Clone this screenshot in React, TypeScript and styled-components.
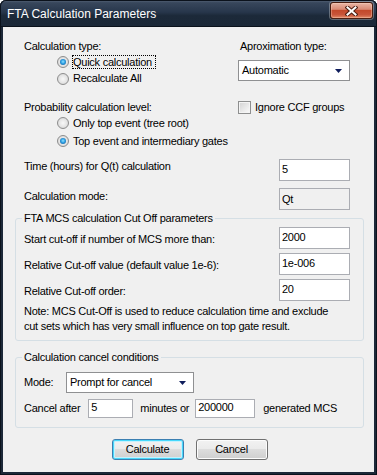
import React from "react"
import styled, { createGlobalStyle } from "styled-components"

const GlobalStyle = createGlobalStyle`
  html, body {
    margin: 0;
    padding: 0;
    background: #ffffff;
  }
  body {
    font-family: "Liberation Sans", Arial, sans-serif;
  }
  * {
    box-sizing: border-box;
  }
`

const Window = styled.div`
  width: 377px;
  height: 475px;
  display: flex;
  flex-direction: column;
  background: #1c2838;
  border-radius: 6px 6px 0 0;
  box-shadow: inset 0 0 0 1px #0b121c;
`

const TitleBar = styled.div`
  height: 27px;
  flex-shrink: 0;
  display: flex;
  align-items: flex-start;
  padding: 0 4px 0 7px;
  border-radius: 6px 6px 0 0;
  background: linear-gradient(180deg, #5a687c 0%, #38475c 10%, #27364b 45%, #1c2939 58%, #1b2838 100%);
  box-shadow: inset 0 0 0 1px #0b121c;
`

const Title = styled.span`
  margin-top: 7px;
  font-size: 12px;
  line-height: 15px;
  color: #ffffff;
`

const CloseButton = styled.div`
  margin-left: auto;
  margin-top: 2px;
  width: 43px;
  height: 17px;
  display: flex;
  align-items: center;
  justify-content: center;
  border: 1px solid #4a1d10;
  border-radius: 3px;
  background: linear-gradient(180deg, #eab6a6 0%, #d98a74 42%, #c3492b 50%, #c8553a 78%, #e28a68 100%);
  box-shadow: 0 0 0 1px rgba(255, 255, 255, 0.3), inset 0 0 0 1px rgba(255, 220, 200, 0.35);
`

const Client = styled.div`
  flex: 1;
  margin: 0 3px 3px;
  background: #f0f0f0;
  padding: 13px 10px 0 12px;
  font-size: 11px;
  line-height: 13px;
  letter-spacing: -0.25px;
  color: #000000;
  display: flex;
  flex-direction: column;
`

const Section = styled.div`
  padding: 0 14px 0 9px;
`

const SplitRow = styled.div<{ $top?: number }>`
  display: flex;
  justify-content: space-between;
  align-items: flex-start;
  margin-top: ${p => p.$top || 0}px;
`

const Caption = styled.div<{ $indent?: number }>`
  padding-left: ${p => p.$indent || 0}px;
  white-space: nowrap;
`

const RightColumn = styled.div`
  width: 112px;
  display: flex;
  flex-direction: column;
  gap: 7px;
`

const RadioList = styled.div`
  margin-left: 33px;
`

const RadioOption = styled.div<{ $step: number }>`
  height: ${p => p.$step}px;
  display: flex;
  align-items: center;
  white-space: nowrap;
`

const RadioMark = styled.span<{ $checked?: boolean }>`
  position: relative;
  width: 12px;
  height: 12px;
  margin-right: 4px;
  flex-shrink: 0;
  border-radius: 50%;
  border: 1px solid #8d8d8d;
  background: radial-gradient(circle at 50% 50%, #f8f8f8 0%, #e6e6e6 50%, #cdcdcd 100%);

  &::after {
    content: "";
    display: ${p => (p.$checked ? "block" : "none")};
    position: absolute;
    left: 2px;
    top: 2px;
    width: 6px;
    height: 6px;
    border-radius: 50%;
    background: radial-gradient(circle at 50% 45%, #8fe2ff 0%, #2b9de2 45%, #134b84 100%);
  }
`

const FocusText = styled.span`
  margin-left: -1px;
  padding: 0 1px;
  height: 14px;
  width: 84px;
  overflow: hidden;
  outline: 1px dotted #000000;
  outline-offset: -1px;
  line-height: 14px;
`

const CheckRow = styled.div`
  width: 112px;
  height: 13px;
  display: flex;
  align-items: center;
  gap: 4px;
  white-space: nowrap;
`

const CheckMark = styled.span`
  width: 13px;
  height: 13px;
  flex-shrink: 0;
  border: 1px solid #8e8f8f;
  background: linear-gradient(135deg, #d2d2d2 0%, #e9e9e9 55%, #fbfbfb 100%);
  box-shadow: inset 0 0 0 1px #f4f4f4;
`

const ComboBox = styled.div<{ $width: number }>`
  width: ${p => p.$width}px;
  height: 21px;
  display: flex;
  align-items: center;
  justify-content: space-between;
  padding: 0 7px 0 3px;
  border: 1px solid #8f9092;
  background: #ffffff;
  white-space: nowrap;
`

const FieldRow = styled.div<{ $top: number }>`
  display: flex;
  justify-content: space-between;
  align-items: flex-start;
  margin-top: ${p => p.$top}px;
`

const FieldLabel = styled.span<{ $dy: number }>`
  margin-top: ${p => p.$dy}px;
  white-space: nowrap;
`

const EditBox = styled.input<{ $width: number; $height: number; $padTop: number; $static?: boolean }>`
  width: ${p => p.$width}px;
  height: ${p => p.$height}px;
  margin: 0;
  padding: ${p => p.$padTop}px 2px ${p => p.$height - 15 - p.$padTop}px;
  border: 1px solid #abadb3;
  border-radius: 0;
  background: ${p => (p.$static ? "#f0f0f0" : "#ffffff")};
  font: inherit;
  line-height: 13px;
  letter-spacing: inherit;
  color: #000000;
  outline: none;
  flex-shrink: 0;
`

const GroupBox = styled.fieldset<{ $top: number; $padTop: number; $padBottom: number }>`
  margin: ${p => p.$top}px 0 0;
  padding: ${p => p.$padTop}px 13px ${p => p.$padBottom}px 8px;
  border: 1px solid #d5dfe5;
  border-radius: 3px;
  min-width: 0;
`

const GroupTitle = styled.legend`
  margin-left: -2px;
  padding: 0 2px;
  line-height: 13px;
`

const Note = styled.p`
  margin: 3px 0 0;
  line-height: 15px;
  white-space: nowrap;
`

const InlineRow = styled.div<{ $top?: number; $height: number }>`
  display: flex;
  align-items: center;
  height: ${p => p.$height}px;
  margin-top: ${p => p.$top || 0}px;
  white-space: nowrap;
`

const InlineLabel = styled.span<{ $width?: number; $left?: number }>`
  width: ${p => (p.$width ? `${p.$width}px` : "auto")};
  margin-left: ${p => p.$left || 0}px;
  flex-shrink: 0;
`

const Spacer = styled.span<{ $width: number }>`
  width: ${p => p.$width}px;
  flex-shrink: 0;
`

const ButtonRow = styled.div`
  display: flex;
  justify-content: center;
  gap: 12px;
  margin-top: 11px;
`

const PushButton = styled.button<{ $default?: boolean }>`
  width: 72px;
  height: 21px;
  margin: 0;
  padding: 0;
  font: inherit;
  letter-spacing: inherit;
  color: #000000;
  border: 1px solid ${p => (p.$default ? "#3c7fb1" : "#707070")};
  border-radius: 3px;
  background: linear-gradient(180deg, #f2f2f2 0%, #ebebeb 45%, #dddddd 50%, #cfcfcf 100%);
  box-shadow: ${p => (p.$default ? "inset 0 0 0 1px #48d8fb, inset 0 0 0 2px #c5f1fd" : "inset 0 0 0 1px #fcfcfc")};
`

const DropArrow = () => (
  <svg width="7" height="4" viewBox="0 0 7 4">
    <path d="M0 0 H7 L3.5 4 Z" fill="#0f1d5c" />
  </svg>
)

const CloseGlyph = () => (
  <svg width="13" height="10" viewBox="0 0 13 10">
    <path d="M2.5 1.5 L10.5 8.5 M10.5 1.5 L2.5 8.5" stroke="#4b1e12" strokeWidth="4" strokeLinecap="square" />
    <path d="M2.5 1.5 L10.5 8.5 M10.5 1.5 L2.5 8.5" stroke="#ffffff" strokeWidth="2" strokeLinecap="square" />
  </svg>
)

const App: React.FC = () => {
  return (
    <>
      <GlobalStyle />
      <Window>
        <TitleBar>
          <Title>FTA Calculation Parameters</Title>
          <CloseButton>
            <CloseGlyph />
          </CloseButton>
        </TitleBar>
        <Client>
          <Section>
            <SplitRow>
              <div>
                <Caption>Calculation type:</Caption>
                <RadioList>
                  <RadioOption $step={17}>
                    <RadioMark $checked />
                    <FocusText>Quick calculation</FocusText>
                  </RadioOption>
                  <RadioOption $step={17}>
                    <RadioMark />
                    Recalculate All
                  </RadioOption>
                </RadioList>
              </div>
              <RightColumn>
                <Caption $indent={2}>Aproximation type:</Caption>
                <ComboBox $width={112}>
                  Automatic
                  <DropArrow />
                </ComboBox>
              </RightColumn>
            </SplitRow>

            <SplitRow $top={14}>
              <div>
                <Caption>Probability calculation level:</Caption>
                <RadioList>
                  <RadioOption $step={18}>
                    <RadioMark />
                    Only top event (tree root)
                  </RadioOption>
                  <RadioOption $step={18}>
                    <RadioMark $checked />
                    Top event and intermediary gates
                  </RadioOption>
                </RadioList>
              </div>
              <CheckRow>
                <CheckMark />
                Ignore CCF groups
              </CheckRow>
            </SplitRow>

            <FieldRow $top={9}>
              <FieldLabel $dy={1}>Time (hours) for Q(t) calculation</FieldLabel>
              <EditBox $width={71} $height={22} $padTop={2} defaultValue="5" />
            </FieldRow>
            <FieldRow $top={7}>
              <FieldLabel $dy={2}>Calculation mode:</FieldLabel>
              <EditBox $width={71} $height={22} $padTop={3} $static readOnly value="Qt" />
            </FieldRow>
          </Section>

          <GroupBox $top={2} $padTop={2} $padBottom={6}>
            <GroupTitle>FTA MCS calculation Cut Off parameters</GroupTitle>
            <FieldRow $top={0}>
              <FieldLabel $dy={6}>Start cut-off if number of MCS more than:</FieldLabel>
              <EditBox $width={71} $height={22} $padTop={2} defaultValue="2000" />
            </FieldRow>
            <FieldRow $top={4}>
              <FieldLabel $dy={6}>Relative Cut-off value (default value 1e-6):</FieldLabel>
              <EditBox $width={71} $height={22} $padTop={2} defaultValue="1e-006" />
            </FieldRow>
            <FieldRow $top={4}>
              <FieldLabel $dy={6}>Relative Cut-off order:</FieldLabel>
              <EditBox $width={71} $height={22} $padTop={2} defaultValue="20" />
            </FieldRow>
            <Note>
              Note: MCS Cut-Off is used to reduce calculation time and exclude
              <br />
              cut sets which has very small influence on top gate result.
            </Note>
          </GroupBox>

          <GroupBox $top={10} $padTop={8} $padBottom={9}>
            <GroupTitle>Calculation cancel conditions</GroupTitle>
            <InlineRow $height={21}>
              <InlineLabel $width={42}>Mode:</InlineLabel>
              <ComboBox $width={128}>
                Prompt for cancel
                <DropArrow />
              </ComboBox>
            </InlineRow>
            <InlineRow $top={6} $height={19}>
              <InlineLabel>Cancel after</InlineLabel>
              <Spacer $width={8} />
              <EditBox $width={45} $height={19} $padTop={0} defaultValue="5" />
              <InlineLabel $left={7}>minutes or</InlineLabel>
              <Spacer $width={6} />
              <EditBox $width={60} $height={19} $padTop={0} defaultValue="200000" />
              <InlineLabel $left={8}>generated MCS</InlineLabel>
            </InlineRow>
          </GroupBox>

          <ButtonRow>
            <PushButton $default>Calculate</PushButton>
            <PushButton>Cancel</PushButton>
          </ButtonRow>
        </Client>
      </Window>
    </>
  )
}

export default App
